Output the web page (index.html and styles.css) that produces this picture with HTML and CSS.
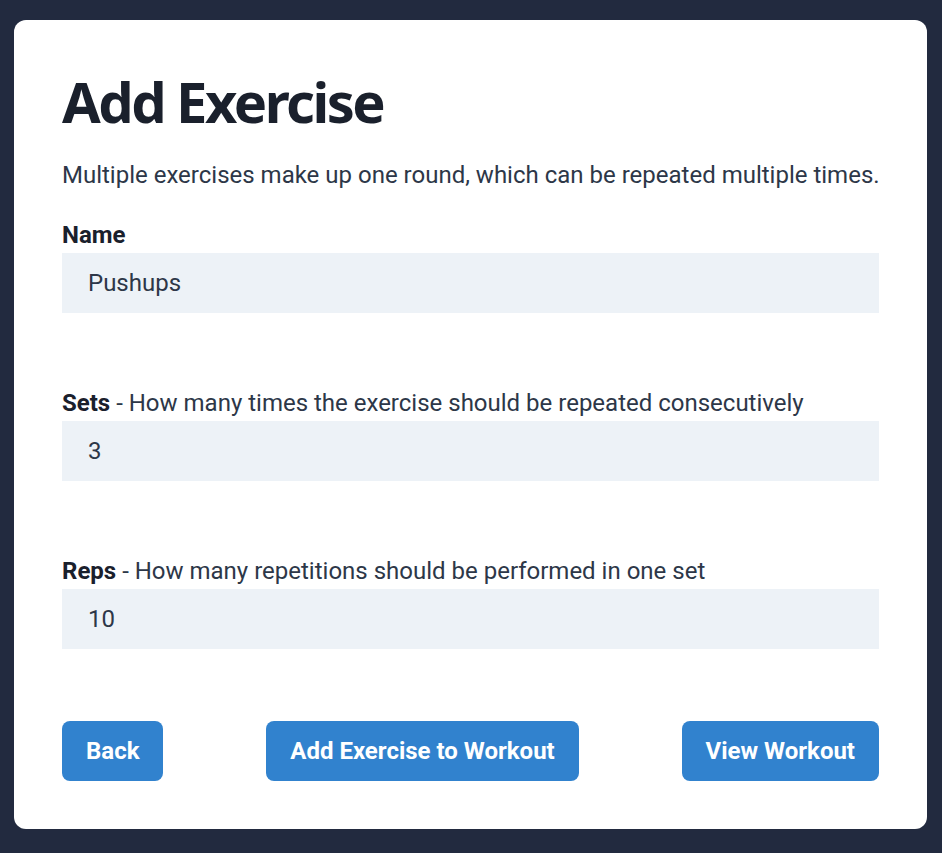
FILE: index.html
```html
<!DOCTYPE html>
<html lang="en">
<head>
<meta charset="utf-8">
<title>Add Exercise</title>
<link rel="stylesheet" href="styles.css">
</head>
<body>
<main class="card">
  <h1 class="title">Add Exercise</h1>
  <p class="subtitle">Multiple exercises make up one round, which can be repeated multiple times.</p>
  <form class="form">
    <div class="field">
      <label class="label" for="name"><strong>Name</strong></label>
      <input class="input" id="name" type="text" value="Pushups">
    </div>
    <div class="field">
      <label class="label" for="sets"><strong>Sets</strong> - How many times the exercise should be repeated consecutively</label>
      <input class="input" id="sets" type="text" value="3">
    </div>
    <div class="field">
      <label class="label" for="reps"><strong>Reps</strong> - How many repetitions should be performed in one set</label>
      <input class="input" id="reps" type="text" value="10">
    </div>
    <div class="actions">
      <button type="button" class="btn">Back</button>
      <button type="button" class="btn">Add Exercise to Workout</button>
      <button type="button" class="btn">View Workout</button>
    </div>
  </form>
</main>
</body>
</html>
```
FILE: styles.css
```css
* { box-sizing: border-box; }
html, body { margin: 0; padding: 0; }
body {
  background: #222a3f;
  min-height: 853px;
  padding: 20px 15px 24px 14px;
  font-family: Roboto, "Liberation Sans", sans-serif;
  font-size: 24px;
  line-height: 1.5;
  color: #2d3748;
}
.card {
  background: #ffffff;
  border-radius: 12px;
  padding: 48px;
}
.title {
  margin: 0;
  font-family: "Noto Sans", "Open Sans", sans-serif;
  font-weight: 700;
  font-size: 56px;
  line-height: 1.2;
  letter-spacing: -2.5px;
  color: #1a202c;
}
.subtitle {
  margin: 22px 0 0;
  white-space: nowrap;
}
.form { margin-top: 24px; }
.field { display: flex; flex-direction: column; margin-bottom: 72px; }
.label { display: block; color: #2d3748; }
.label strong { color: #1a202c; font-weight: 700; }
.input {
  display: block;
  width: 100%;
  height: 60px;
  border: none;
  border-radius: 0;
  background: #edf2f7;
  padding: 0 26px;
  font-family: Roboto, "Liberation Sans", sans-serif;
  font-size: 24px;
  color: #2d3748;
  outline: none;
}
.actions {
  display: flex;
  justify-content: space-between;
}
.btn {
  height: 60px;
  padding: 0 24px;
  border: none;
  border-radius: 8px;
  background: #3182ce;
  color: #ffffff;
  font-family: Roboto, "Liberation Sans", sans-serif;
  font-weight: 700;
  font-size: 24px;
  cursor: pointer;
}
```
